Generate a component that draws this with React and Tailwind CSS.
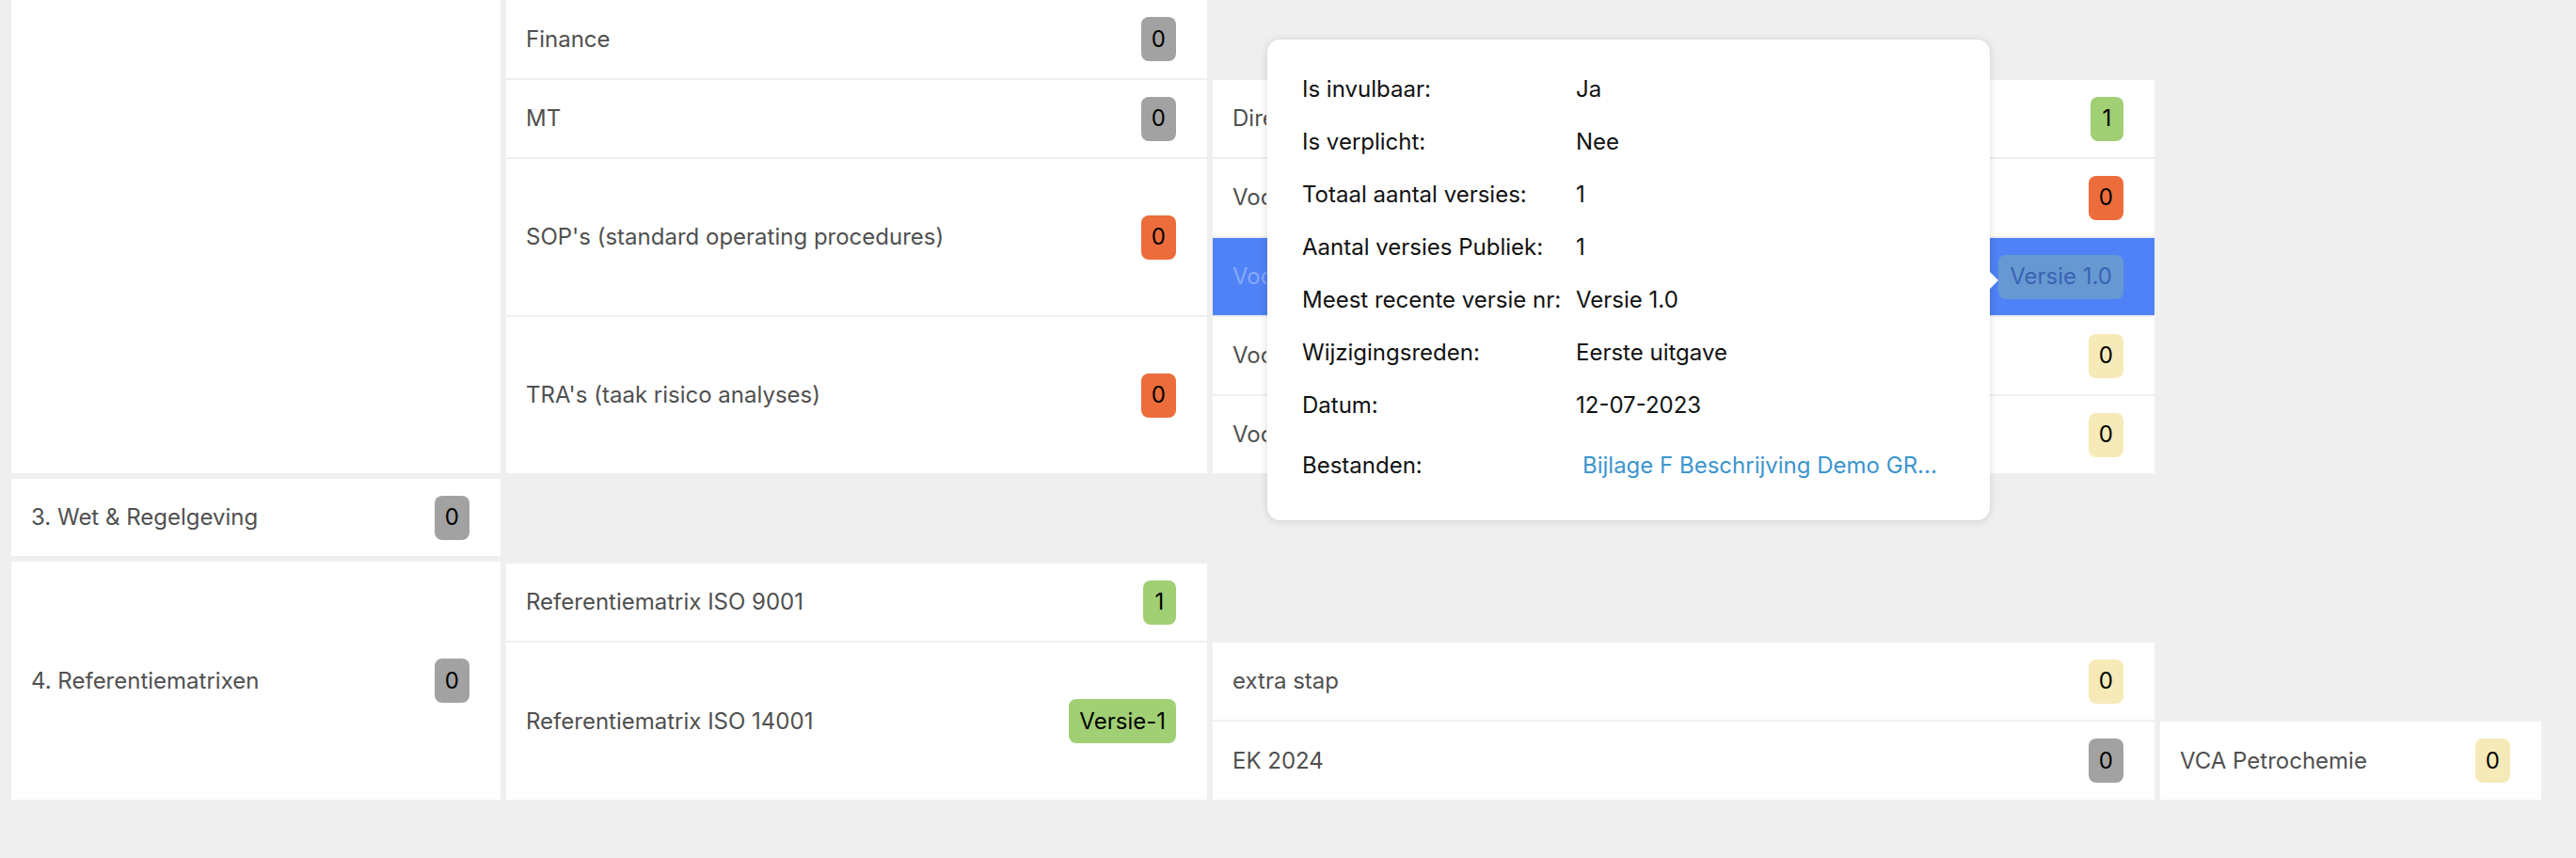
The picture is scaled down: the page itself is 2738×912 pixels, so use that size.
import React from "react";

const GRAY = "bg-[#a2a2a2]";
const ORANGE = "bg-[#ec6d3b]";
const GREEN = "bg-[#a1cf74]";
const YELLOW = "bg-[#f6eab8]";

function Badge({ color, children }) {
  return (
    <span
      className={
        "flex h-[47px] min-w-[35px] items-center justify-center rounded-[8px] px-[11px] text-[24px] leading-none text-black " +
        color
      }
    >
      {children}
    </span>
  );
}

function Cell({ w, label, badge, color, h, selected, clip }) {
  return (
    <div
      className={
        "flex shrink-0 items-center justify-between pl-[21px] pr-[33px] text-[24px] " +
        w +
        " " +
        (h || "self-stretch") +
        " " +
        (selected ? "bg-[#4f82f6] text-[#86a9f8]" : "bg-white text-[#505050]")
      }
    >
      <span className={"whitespace-nowrap " + (clip ? "w-[36px] overflow-hidden" : "")}>{label}</span>
      {badge !== undefined &&
        (selected ? (
          <span className="flex h-[47px] items-center rounded-[8px] bg-[#6699d1] px-[12px] text-[24px] text-[#3b62b3]">
            {badge}
          </span>
        ) : (
          <Badge color={color}>{badge}</Badge>
        ))}
    </div>
  );
}

function Row({ children }) {
  return <div className="flex gap-[6px]">{children}</div>;
}

function Col({ children }) {
  return <div className="flex flex-col gap-[2px]">{children}</div>;
}

const C1 = "w-[520px]";
const C2 = "w-[745px]";
const C3 = "w-[1001px]";
const C4 = "w-[405px]";

const info = [
  ["Is invulbaar:", "Ja"],
  ["Is verplicht:", "Nee"],
  ["Totaal aantal versies:", "1"],
  ["Aantal versies Publiek:", "1"],
  ["Meest recente versie nr:", "Versie 1.0"],
  ["Wijzigingsreden:", "Eerste uitgave"],
  ["Datum:", "12-07-2023"],
];

export default function App() {
  return (
    <div
      className="relative h-[912px] w-[2738px] overflow-hidden bg-[#efefef] pl-[12px]"
      style={{ fontFamily: "Inter, 'Noto Sans', sans-serif" }}
    >
      <div className="flex flex-col gap-[6px]">
        {/* Section 1 */}
        <Row>
          <div className={"self-stretch bg-white " + C1} />
          <Col>
            <Row>
              <Cell w={C2} h="h-[83px]" label="Finance" badge="0" color={GRAY} />
            </Row>
            <Row>
              <Cell w={C2} label="MT" badge="0" color={GRAY} />
              <Col>
                <Cell w={C3} h="h-[82px]" label="Directie" badge="1" color={GREEN} clip />
              </Col>
            </Row>
            <Row>
              <Cell
                w={C2}
                label="SOP's (standard operating procedures)"
                badge="0"
                color={ORANGE}
              />
              <Col>
                <Cell w={C3} h="h-[82px]" label="Voorbeeld SOP" badge="0" color={ORANGE} clip />
                <Cell w={C3} h="h-[82px]" label="Voorbeeld SOP 2" badge="Versie 1.0" selected clip />
              </Col>
            </Row>
            <Row>
              <Cell w={C2} label="TRA's (taak risico analyses)" badge="0" color={ORANGE} />
              <Col>
                <Cell w={C3} h="h-[82px]" label="Voorbeeld TRA" badge="0" color={YELLOW} clip />
                <Cell w={C3} h="h-[82px]" label="Voorbeeld TRA 2" badge="0" color={YELLOW} clip />
              </Col>
            </Row>
          </Col>
        </Row>

        {/* Section 3 */}
        <Row>
          <Cell w={C1} h="h-[82px]" label="3. Wet & Regelgeving" badge="0" color={GRAY} />
        </Row>

        {/* Section 4 */}
        <Row>
          <Cell w={C1} label="4. Referentiematrixen" badge="0" color={GRAY} />
          <div className="pt-[2px]">
            <Col>
              <Row>
                <Cell w={C2} h="h-[82px]" label="Referentiematrix ISO 9001" badge="1" color={GREEN} />
              </Row>
              <Row>
                <Cell w={C2} label="Referentiematrix ISO 14001" badge="Versie-1" color={GREEN} />
                <Col>
                  <Row>
                    <Cell w={C3} h="h-[82px]" label="extra stap" badge="0" color={YELLOW} />
                  </Row>
                  <Row>
                    <Cell w={C3} h="h-[83px]" label="EK 2024" badge="0" color={GRAY} />
                    <Col>
                      <Cell w={C4} h="h-[83px]" label="VCA Petrochemie" badge="0" color={YELLOW} />
                    </Col>
                  </Row>
                </Col>
              </Row>
            </Col>
          </div>
        </Row>
      </div>

      {/* Popover */}
      <div className="absolute left-[1347px] top-[42px] h-[511px] w-[768px] rounded-[14px] bg-white pl-[37px] pt-[25px] text-[24px] text-[#111111] shadow-[0_1px_10px_rgba(0,0,0,0.14)]">
        <div className="grid grid-cols-[291px_1fr]">
          {info.map(([k, v]) => (
            <React.Fragment key={k}>
              <div className="flex h-[56px] items-center whitespace-nowrap">{k}</div>
              <div className="flex h-[56px] items-center whitespace-nowrap">{v}</div>
            </React.Fragment>
          ))}
          <div className="mt-[8px] flex h-[56px] items-center">Bestanden:</div>
          <div className="mt-[8px] flex h-[56px] items-center pl-[7px] text-[#3b95cf]">
            Bijlage F Beschrijving Demo GR...
          </div>
        </div>
      </div>
      <div className="absolute left-[2114px] top-[288px] h-0 w-0 border-y-[10px] border-l-[10px] border-y-transparent border-l-white" />
    </div>
  );
}
